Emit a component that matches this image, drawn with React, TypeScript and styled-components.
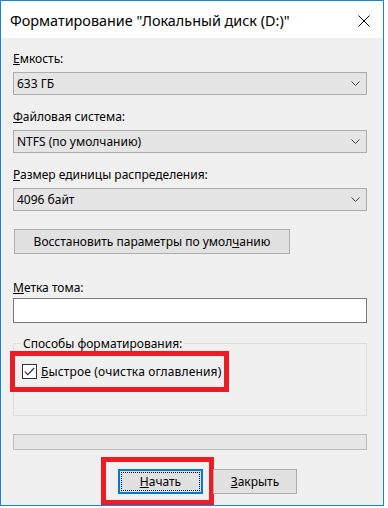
import React from 'react';
import styled, { createGlobalStyle } from 'styled-components';

const GlobalStyle = createGlobalStyle`
  html, body {
    margin: 0;
    padding: 0;
    background: #fff;
  }
  body {
    font-family: "Noto Sans", "Liberation Sans", sans-serif;
    font-size: 12px;
    color: #000;
  }
`;

const Window = styled.div`
  width: 384px;
  height: 506px;
  box-sizing: border-box;
  border: 1px solid #1883d7;
  display: flex;
  flex-direction: column;
  background: #f0f0f0;
`;

const TitleBar = styled.div`
  height: 37px;
  flex: none;
  box-sizing: border-box;
  padding: 3px 13px 0 9px;
  background: #fff;
  display: flex;
  align-items: center;
  font-size: 14.4px;
  line-height: 18px;
`;

const CloseIcon = styled.svg`
  margin-left: auto;
  width: 12px;
  height: 12px;
  display: block;
`;

const Body = styled.div`
  flex: 1;
  padding: 13px 16px 0 12px;
  display: flex;
  flex-direction: column;
  align-items: flex-start;
`;

const Label = styled.div<{ $gap?: number }>`
  line-height: 15px;
  height: 15px;
  margin-bottom: ${p => p.$gap ?? 6}px;
`;

const Select = styled.div`
  width: 354px;
  height: 23px;
  box-sizing: border-box;
  border: 1px solid #adadad;
  background: #e5e5e5;
  display: flex;
  align-items: center;
  padding: 0 6px 0 3px;
  line-height: 15px;
  margin-bottom: 14px;
`;

const Chevron = styled.svg`
  margin-left: auto;
  width: 9px;
  height: 5px;
  display: block;
`;

const Button = styled.div<{ $width: number; $focused?: boolean }>`
  position: relative;
  width: ${p => p.$width}px;
  height: 25px;
  box-sizing: border-box;
  border: ${p => (p.$focused ? '2px solid #0078d7' : '1px solid #adadad')};
  background: #e1e1e1;
  display: flex;
  align-items: center;
  justify-content: center;
  line-height: 15px;

  &::before {
    content: ${p => (p.$focused ? "''" : 'none')};
    position: absolute;
    inset: 1px;
    border: 1px dotted #000;
  }
`;

const RestoreButton = styled(Button)`
  margin: 4px 0 0 1px;
`;

const VolumeLabel = styled(Label)`
  margin-top: 26px;
`;

const TextBox = styled.div`
  width: 354px;
  height: 25px;
  box-sizing: border-box;
  border: 1px solid #7a7a7a;
  background: #fff;
`;

const GroupBox = styled.fieldset`
  width: 354px;
  box-sizing: border-box;
  margin: 13px 0 0;
  padding: 12px 0 35px 7px;
  border: 1px solid #dcdcdc;
  min-width: 0;
`;

const Legend = styled.legend`
  padding: 0 2px;
  line-height: 15px;
`;

const Highlight = styled.div<{ $inset: string }>`
  position: relative;
  display: inline-flex;

  &::after {
    content: '';
    position: absolute;
    inset: ${p => p.$inset};
    border: 5px solid #ed1c24;
    pointer-events: none;
  }
`;

const CheckRow = styled.label`
  width: 200px;
  margin-left: 1px;
  display: flex;
  align-items: center;
  height: 15px;
  line-height: 15px;
  letter-spacing: 0.15px;
`;

const CheckBox = styled.span`
  width: 15px;
  height: 15px;
  box-sizing: border-box;
  border: 1px solid #333;
  background: #fff;
  display: flex;
  align-items: center;
  justify-content: center;
  margin-right: 4px;
  flex: none;
`;

const Progress = styled.div`
  width: 354px;
  height: 16px;
  box-sizing: border-box;
  margin-top: 18px;
  border: 1px solid #bcbcbc;
  background: #e6e6e6;
`;

const ButtonRow = styled.div`
  display: flex;
  gap: 10px;
  margin: 19px 0 0 105px;
`;

const DownArrow = () => (
  <Chevron viewBox="0 0 9 5">
    <path d="M0.5 0.5 L4.5 4.5 L8.5 0.5" fill="none" stroke="#444" strokeWidth="1" />
  </Chevron>
);

const App: React.FC = () => {
  return (
    <>
      <GlobalStyle />
      <Window>
        <TitleBar>
          <span>Форматирование "Локальный диск (D:)"</span>
          <CloseIcon viewBox="0 0 12 12">
            <path d="M0.5 0.5 L11.5 11.5 M11.5 0.5 L0.5 11.5" stroke="#000" strokeWidth="1" />
          </CloseIcon>
        </TitleBar>
        <Body>
          <Label><u>Е</u>мкость:</Label>
          <Select>
            <span>633 ГБ</span>
            <DownArrow />
          </Select>

          <Label><u>Ф</u>айловая система:</Label>
          <Select>
            <span>NTFS (по умолчанию)</span>
            <DownArrow />
          </Select>

          <Label><u>Р</u>азмер единицы распределения:</Label>
          <Select>
            <span>4096 байт</span>
            <DownArrow />
          </Select>

          <RestoreButton $width={276}>
            Восстановить параметры по умол<u>ч</u>анию
          </RestoreButton>

          <VolumeLabel $gap={3}><u>М</u>етка тома:</VolumeLabel>
          <TextBox />

          <GroupBox>
            <Legend>Способы форматирования:</Legend>
            <Highlight $inset="-13px -7px -13px -11px">
              <CheckRow>
                <CheckBox>
                  <svg width="11" height="9" viewBox="0 0 11 9">
                    <path d="M0.8 4.6 L3.8 7.6 L10.2 1" fill="none" stroke="#333" strokeWidth="1.2" />
                  </svg>
                </CheckBox>
                <span><u>Б</u>ыстрое (очистка оглавления)</span>
              </CheckRow>
            </Highlight>
          </GroupBox>

          <Progress />

          <ButtonRow>
            <Highlight $inset="-12px -11px -11px -17px">
              <Button $width={85} $focused>
                <span><u>Н</u>ачать</span>
              </Button>
            </Highlight>
            <Button $width={84}>
              <span><u>З</u>акрыть</span>
            </Button>
          </ButtonRow>
        </Body>
      </Window>
    </>
  );
};

export default App;
